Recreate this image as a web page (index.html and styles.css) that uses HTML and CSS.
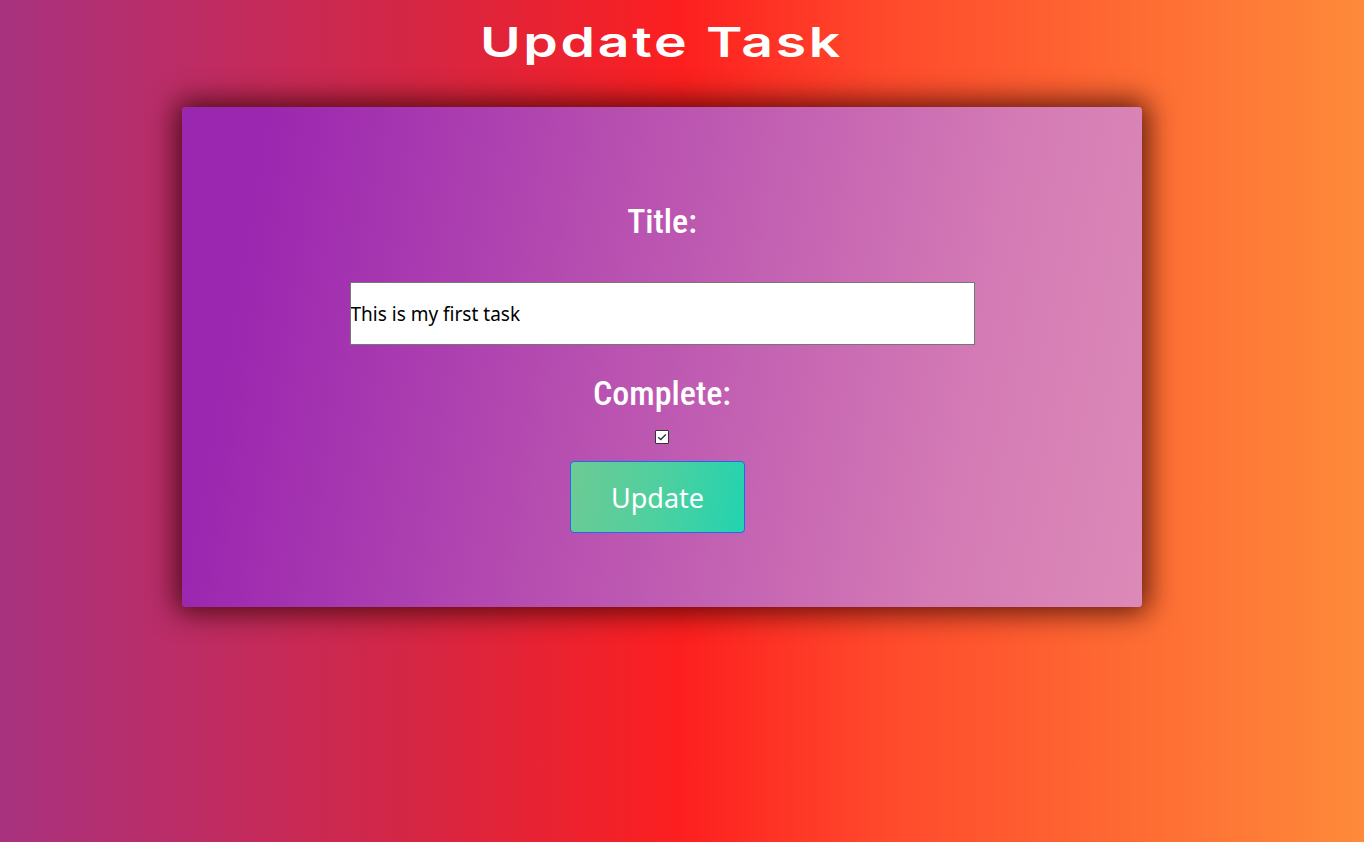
FILE: index.html
```html
<!DOCTYPE html>
<html lang="en">
<head>
<meta charset="utf-8">
<title>Update Task</title>
<link rel="stylesheet" href="styles.css">
</head>
<body>
<div class="page">
  <h1 class="page-title"><span class="page-title-text">Update Task</span></h1>
  <form class="card">
    <label class="field-label" for="title">Title:</label>
    <input class="text-input" id="title" type="text" value="This is my first task">
    <label class="field-label complete-label" for="complete">Complete:</label>
    <input class="check" id="complete" type="checkbox" checked>
    <button class="update-btn" type="button">Update</button>
  </form>
</div>
</body>
</html>
```

FILE: styles.css
```css
html, body {
  margin: 0;
  padding: 0;
  height: 100%;
}

body {
  background: linear-gradient(to right, #a83280 0%, #d42645 30%, #fd1f1f 50%, #ff4a2c 65%, #fe8a3a 100%);
  font-family: "Noto Sans", "Open Sans", sans-serif;
}

.page {
  display: flex;
  flex-direction: column;
  align-items: center;
  padding-right: 40px;
}

.page-title {
  margin: 14px 0 37px;
  height: 56px;
  line-height: 56px;
  font-family: Inter, "DejaVu Sans", sans-serif;
  font-weight: 600;
  font-size: 41px;
  letter-spacing: 2px;
  color: #ffffff;
}

.page-title-text {
  display: inline-block;
  transform: scaleX(1.35);
}

.card {
  box-sizing: border-box;
  width: 960px;
  height: 500px;
  border-radius: 4px;
  background: linear-gradient(100deg, #9b26b0 8%, #b54cb0 40%, #d47ab5 80%, #dc8ab8 100%);
  box-shadow: 0 0 28px 6px rgba(40, 0, 0, 0.75);
  display: flex;
  flex-direction: column;
  align-items: center;
  padding-top: 94px;
}

.field-label {
  display: block;
  height: 40px;
  line-height: 40px;
  font-family: "Roboto Condensed", "Liberation Sans Narrow", "DejaVu Sans Condensed", Roboto, sans-serif;
  font-stretch: condensed;
  font-weight: 500;
  font-size: 34px;
  color: #ffffff;
}

.text-input {
  box-sizing: border-box;
  width: 625px;
  height: 63px;
  margin-top: 41px;
  padding: 0;
  border: 1px solid #767676;
  background: #ffffff;
  font-family: "Noto Sans", "Open Sans", sans-serif;
  font-size: 19px;
  color: #000000;
  outline: none;
}

.complete-label {
  margin-top: 28px;
}

.check {
  appearance: none;
  -webkit-appearance: none;
  box-sizing: border-box;
  width: 14px;
  height: 14px;
  margin: 17px 0 0;
  border: 1px solid #333333;
  border-radius: 1px;
  background: #ffffff url("data:image/svg+xml;utf8,<svg xmlns='http://www.w3.org/2000/svg' width='12' height='12' viewBox='0 0 12 12'><path d='M2.2 6.2 L4.8 8.6 L9.8 3.4' fill='none' stroke='%23333' stroke-width='1.4'/></svg>") center / 12px 12px no-repeat;
}

.update-btn {
  box-sizing: border-box;
  width: 175px;
  height: 72px;
  margin: 17px 9px 0 0;
  border: 1px solid #1a6cf0;
  border-radius: 4px;
  background: linear-gradient(100deg, #6dca94 0%, #4fd09f 50%, #22d3b0 100%);
  color: #ffffff;
  font-family: "Noto Sans", "Open Sans", sans-serif;
  font-size: 27px;
  cursor: pointer;
}
```
